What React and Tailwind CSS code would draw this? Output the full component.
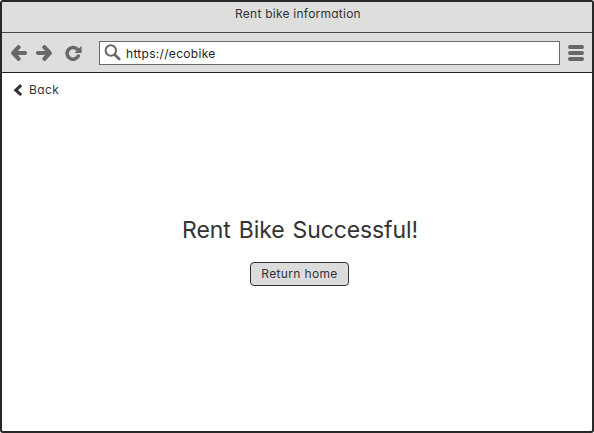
function ArrowIcon({ className = "" }) {
  return (
    <svg viewBox="0 0 16 16" className={`h-4 w-4 shrink-0 ${className}`} fill="none" stroke="#686868" strokeWidth="4.1" strokeLinecap="round" strokeLinejoin="round">
      <path d="M7.6 2.2 2.2 8l5.4 5.8M3 8h11" />
    </svg>
  );
}

function TitleBar() {
  return (
    <div className="flex h-[31px] shrink-0 justify-center border-b border-[#444] bg-[#dededd] pl-[2px] pt-[2px]">
      <span className="text-[12px] leading-[20px] tracking-[0.24px]">Rent bike information</span>
    </div>
  );
}

function Toolbar() {
  return (
    <div className="flex h-10 shrink-0 items-center border-b border-[#222] bg-[#dededd] pl-[9px] pr-2">
      <ArrowIcon />
      <ArrowIcon className="ml-[9px] rotate-180" />
      <svg viewBox="0 0 17 16" className="ml-[13px] h-4 w-[17px] shrink-0" fill="none">
        <path d="M12 4A5.9 5.9 0 1 0 13.3 11" stroke="#686868" strokeWidth="3.5" strokeLinecap="round" />
        <path d="M16.6.7v7.2H9.4Z" fill="#686868" />
      </svg>
      <div className="ml-[17px] flex h-6 flex-1 items-center border border-[#686868] bg-white pl-1">
        <svg viewBox="0 0 17 17" className="h-[17px] w-[17px] shrink-0" fill="none" stroke="#686868">
          <circle cx="6.8" cy="6.5" r="5.2" strokeWidth="2" />
          <path d="m10.8 10.7 4.4 4.2" strokeWidth="2.8" strokeLinecap="round" />
        </svg>
        <span className="ml-[5px] pt-[2px] text-[12px] leading-5 tracking-[0.3px] text-[#222]">https://ecobike</span>
      </div>
      <div className="ml-2 flex w-4 flex-col gap-[2px]">
        <span className="h-1 rounded-full bg-[#686868]" />
        <span className="h-1 rounded-full bg-[#686868]" />
        <span className="h-1 rounded-full bg-[#686868]" />
      </div>
    </div>
  );
}

export default function App() {
  return (
    <div className="h-[433px] w-[594px] bg-white">
      <div className="flex h-full w-full flex-col overflow-hidden rounded-[3px] border-2 border-[#292727] bg-white font-['Inter','Liberation_Sans',sans-serif] text-[#333] [font-feature-settings:'cv11']">
        <TitleBar />
        <Toolbar />
        <main className="flex flex-1 flex-col">
          <button className="ml-[11px] mt-[7px] flex h-5 items-center self-start">
            <svg viewBox="0 0 10 12" className="h-3 w-[10px]" fill="none" stroke="#333" strokeWidth="3">
              <path d="M8.2 1.2 2.8 6.2l5.4 4.8" />
            </svg>
            <span className="ml-[6px] text-[12px] leading-5 tracking-[0.4px]">Back</span>
          </button>
          <h1 className="mt-[112px] self-center pl-[6px] text-[23px] leading-[36px] tracking-[-0.12px] [word-spacing:1.8px]">Rent Bike Successful!</h1>
          <button className="ml-[248px] mt-[14px] flex h-6 w-[99px] items-center justify-center self-start rounded-[4px] border border-[#333] bg-[#dcdcdc] text-[12px] tracking-[0.35px]">
            Return home
          </button>
        </main>
      </div>
    </div>
  );
}
